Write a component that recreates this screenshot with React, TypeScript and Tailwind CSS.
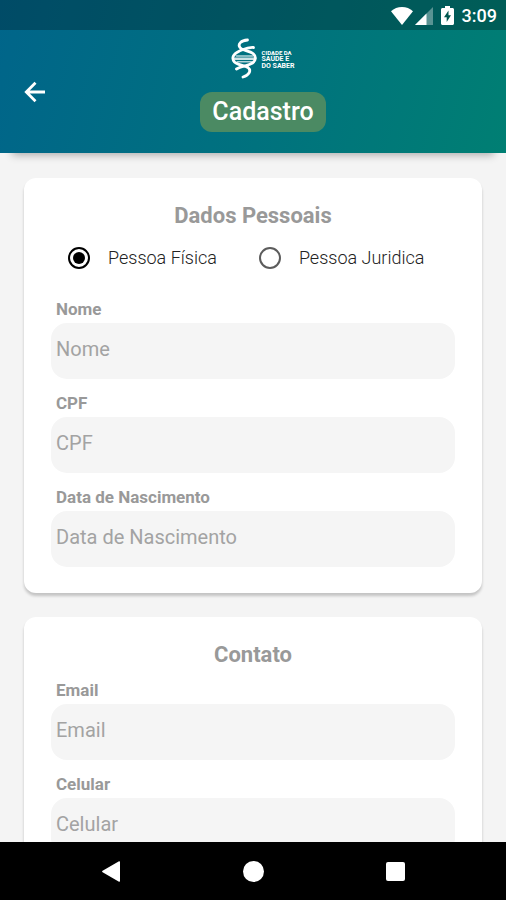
import { useState } from "react";

interface FieldProps {
  id: string;
  label: string;
  type?: string;
}

function Field({ id, label, type = "text" }: FieldProps) {
  return (
    <div>
      <label htmlFor={id} className="block pl-[5px] mb-1 text-[17px] leading-5 font-bold text-[#999999]">
        {label}
      </label>
      <input
        id={id}
        type={type}
        placeholder={label}
        className="block w-full h-14 rounded-2xl bg-[#f5f5f5] pl-[5px] pr-3 pb-[5px] text-[20px] text-gray-700 placeholder:text-[#a3a3a3] outline-none"
      />
    </div>
  );
}

interface RadioProps {
  label: string;
  value: string;
  selected: string;
  onSelect: (value: string) => void;
}

function Radio({ label, value, selected, onSelect }: RadioProps) {
  return (
    <label className="flex items-center gap-[18px] text-[18px] leading-6 font-light text-[#222222]">
      <input
        type="radio"
        name="tipo"
        value={value}
        checked={selected === value}
        onChange={() => onSelect(value)}
        className="appearance-none w-[22px] h-[22px] rounded-full border-2 border-[#5c5c5c] bg-clip-content p-[3px] checked:border-black checked:bg-black"
      />
      {label}
    </label>
  );
}

function StatusBar() {
  return (
    <div className="flex items-center justify-end h-[30px] pt-px pr-[9px] bg-black/25 text-white">
      <svg width="22" height="18" viewBox="0 0 22 18" fill="currentColor" className="mr-0.5">
        <path d="M11 18 0 4.200C3 1.600 6.800 0 11 0s8 1.600 11 4.200z" />
      </svg>
      <svg width="18" height="18" viewBox="0 0 18 18" fill="currentColor" className="mr-2">
        <path d="M18 0v18H0z" opacity="0.35" />
        <path d="M11.500 6.500V18H0z" />
      </svg>
      <svg width="13" height="19" viewBox="0 0 13 19" className="mr-2">
        <path d="M4 0h5v2h2.500c.8 0 1.500.7 1.500 1.500v14c0 .8-.7 1.500-1.500 1.500h-10C.7 19 0 18.300 0 17.500v-14C0 2.700.7 2 1.500 2H4z" fill="#fff" />
        <path d="M7.500 4.500 3 11.300h2.700v4.700L10 9.300H7.500z" fill="#00574f" />
      </svg>
      <span className="text-[18px] leading-6 font-medium">3:09</span>
    </div>
  );
}

function Logo() {
  return (
    <div className="flex items-center gap-[3px] text-white">
      <svg width="27" height="42" viewBox="0 0 27 42" fill="none" stroke="currentColor" strokeLinecap="round">
        <path d="M16.500 2C10 2.500 6.500 6 9 9.500c2.500 3.500 9 3 13 6 3.500 3 3 7-.5 9.500-4.500 3-11.500 3-16 6" strokeWidth="2.800" />
        <path d="M22.500 9.500c-5.500-.5-9 1.500-14 3.500C2.500 15.500 0 20 3.500 24c3.500 3.500 10 3 13.500 5.500 3.500 3 1.500 7.500-5 9.500" strokeWidth="2.800" />
        <path d="M4 20.800h19" strokeWidth="2.600" opacity="0.8" />
        <path d="M5.500 18h16M6.500 23.800h14" strokeWidth="1.600" opacity="0.7" />
      </svg>
      <div className="flex flex-col items-start font-bold text-[7px] leading-[7px] whitespace-nowrap">
        <span className="text-[6px]">CIDADE DA</span>
        <span>SAÚDE E</span>
        <span>DO SABER</span>
      </div>
    </div>
  );
}

function Card({ title, children }: { title: string; children: React.ReactNode }) {
  return (
    <section className="rounded-xl bg-white px-[27px] pt-6 pb-[26px] shadow-[0_3px_3px_rgba(0,0,0,0.2)]">
      <h2 className="text-center text-[22px] leading-7 font-bold text-[#999999]">{title}</h2>
      {children}
    </section>
  );
}

export default function App() {
  const [tipo, setTipo] = useState("fisica");

  return (
    <div className="flex flex-col h-screen bg-[#f4f4f4] font-[Roboto,sans-serif]">
      <header className="relative z-10 shrink-0 bg-linear-[105deg,#00658a,#00717f_50%,#007f73] shadow-[0_14px_8px_-12px_rgba(0,0,0,0.3)]">
        <StatusBar />
        <div className="grid grid-cols-[1fr_auto_1fr] items-center h-[123px]">
          <button type="button" aria-label="Voltar" className="ml-6 w-[22px] text-white">
            <svg width="22" height="22" viewBox="0 0 22 22" fill="none" stroke="currentColor" strokeWidth="2.800">
              <path d="M21 11H3M11.500 1.800 2.300 11l9.200 9.200" />
            </svg>
          </button>
          <div className="flex flex-col items-center gap-3 pl-5 pb-[13px]">
            <Logo />
            <h1 className="rounded-xl bg-[#4b8a63] px-3 text-[25px] leading-10 font-medium text-white">Cadastro</h1>
          </div>
        </div>
      </header>

      <main className="flex-1 min-h-0 overflow-y-auto [scrollbar-width:none]">
        <form className="flex flex-col gap-6 px-6 py-[25px]">
          <Card title="Dados Pessoais">
            <div className="flex gap-[42px] mt-4 mb-[29px] pl-[17px]">
              <Radio label="Pessoa Física" value="fisica" selected={tipo} onSelect={setTipo} />
              <Radio label="Pessoa Juridica" value="juridica" selected={tipo} onSelect={setTipo} />
            </div>
            <div className="flex flex-col gap-[14px]">
              <Field id="nome" label="Nome" />
              <Field id="cpf" label="CPF" />
              <Field id="nascimento" label="Data de Nascimento" />
            </div>
          </Card>

          <Card title="Contato">
            <div className="flex flex-col gap-[14px] mt-[11px]">
              <Field id="email" label="Email" type="email" />
              <Field id="celular" label="Celular" type="tel" />
            </div>
          </Card>
        </form>
      </main>

      <nav className="grid grid-cols-3 items-center justify-items-center shrink-0 h-[58px] px-10 bg-black text-white">
        <button type="button" aria-label="Voltar">
          <svg width="18" height="21" viewBox="0 0 18 21" fill="currentColor">
            <path d="M17 .3c.600-.3 1 .1 1 .7v19c0 .6-.4 1-1 .7L.6 11.200c-.7-.4-.7-1 0-1.400z" />
          </svg>
        </button>
        <button type="button" aria-label="Início" className="w-[21px] h-[21px] rounded-full bg-white" />
        <button type="button" aria-label="Recentes" className="w-[19px] h-[19px] rounded-xs bg-white" />
      </nav>
    </div>
  );
}
